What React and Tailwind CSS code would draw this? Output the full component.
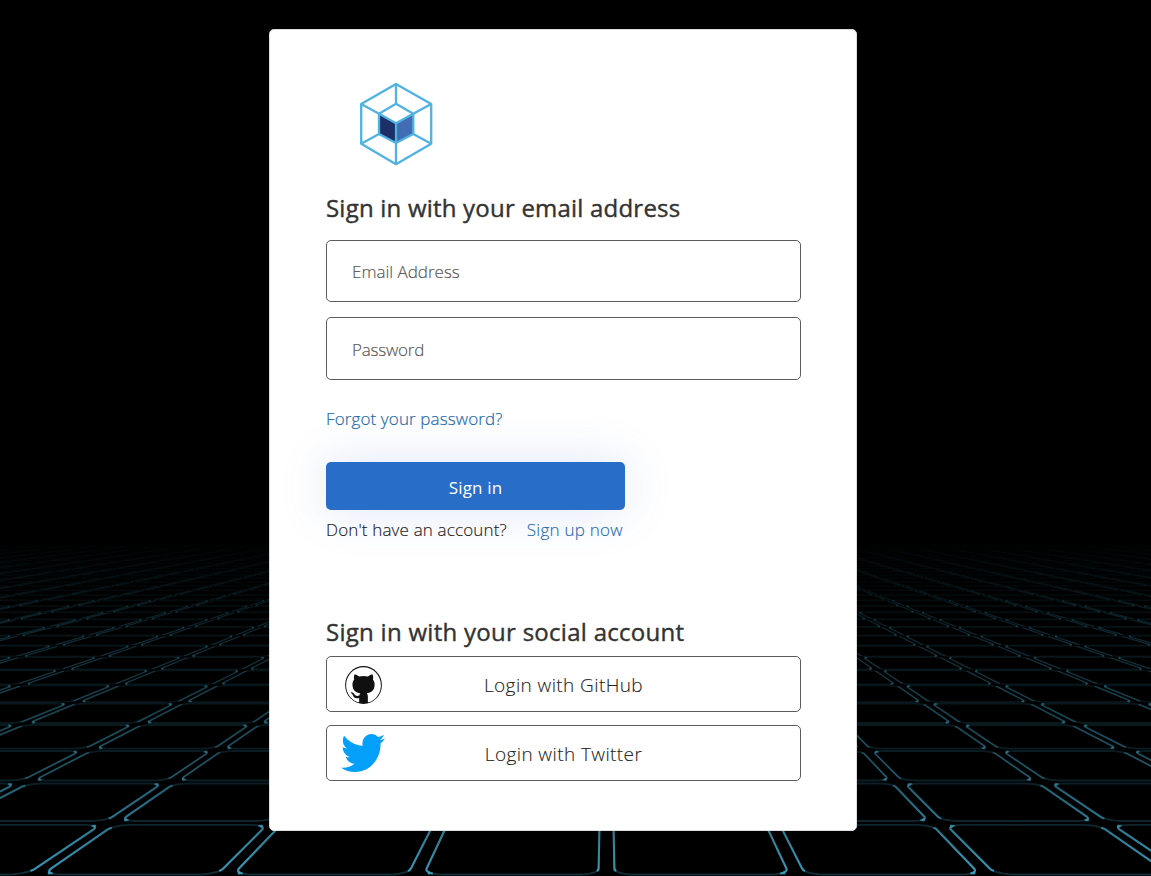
import React from "react";
import { FaTwitter } from "react-icons/fa";

const HORIZON = 485;
const CENTER = 606.5;
const INSET = 0.042;
const RADIUS = 0.095;

function project(u, n) {
  const depth = 1 / (0.002959 + 0.0004085 * n);
  return `${(CENTER + u * 0.4895 * depth).toFixed(2)} ${(HORIZON + depth).toFixed(2)}`;
}

// Points of one rounded corner on the floor plane, projected into the view.
function arc(cx, cy, from, to) {
  const points = [];
  const step = (to - from) / 6;
  for (let i = 0; i <= 6; i++) {
    const t = ((from + step * i) * Math.PI) / 180;
    points.push(project(cx + RADIUS * Math.cos(t), cy + RADIUS * Math.sin(t)));
  }
  return points;
}

function buildFloor() {
  const rows = [];
  const inner = INSET + RADIUS;
  for (let n = -2; n < 34; n++) {
    let outline = "";
    let sides = "";
    let dots = "";
    const half = Math.ceil(610 / (0.4895 / (0.002959 + 0.0004085 * (n + 1))));
    for (let k = -half; k < half; k++) {
      const left = k + inner;
      const right = k + 1 - inner;
      const near = n + inner;
      const far = n + 1 - inner;
      outline += `M${[
        ...arc(right, far, 0, 90),
        ...arc(left, far, 90, 180),
        ...arc(left, near, 180, 270),
        ...arc(right, near, 270, 360),
      ].join("L")}Z`;
      const tight = k < 0 ? 55 : 20;
      const loose = k < 0 ? 20 : 55;
      sides += `M${[...arc(right, near, 360 - loose, 360), ...arc(right, far, 0, tight)].join("L")}`;
      sides += `M${[...arc(left, far, 180 - loose, 180), ...arc(left, near, 180, 180 + tight)].join("L")}`;
      const c = RADIUS * 0.75;
      if (k < 0) {
        dots += `M${project(right + c, far + c)}h.01M${project(left - c, near - c)}h.01`;
      } else {
        dots += `M${project(left - c, far + c)}h.01M${project(right + c, near - c)}h.01`;
      }
    }
    rows.push({ n, outline, sides, dots });
  }
  return rows;
}

const floor = buildFloor();

function Backdrop() {
  return (
    <svg className="absolute inset-0 h-[876px] w-[1151px]" viewBox="0 0 1151 876" aria-hidden="true">
      <defs>
        <linearGradient id="fadeSides" gradientUnits="userSpaceOnUse" x1="0" y1="540" x2="0" y2="876">
          <stop offset="0" stopColor="#3b9dbd" stopOpacity="0" />
          <stop offset="0.15" stopColor="#3b9dbd" stopOpacity="0.09" />
          <stop offset="0.4" stopColor="#3b9dbd" stopOpacity="0.25" />
          <stop offset="0.7" stopColor="#3b9dbd" stopOpacity="0.45" />
          <stop offset="1" stopColor="#3b9dbd" stopOpacity="0.95" />
        </linearGradient>
        <linearGradient id="fadeOutline" gradientUnits="userSpaceOnUse" x1="0" y1="540" x2="0" y2="876">
          <stop offset="0" stopColor="#3b9dbd" stopOpacity="0" />
          <stop offset="0.15" stopColor="#3b9dbd" stopOpacity="0.03" />
          <stop offset="0.4" stopColor="#3b9dbd" stopOpacity="0.13" />
          <stop offset="0.7" stopColor="#3b9dbd" stopOpacity="0.19" />
          <stop offset="1" stopColor="#3b9dbd" stopOpacity="0.28" />
        </linearGradient>
        <filter id="soft" x="0" y="0" width="1" height="1">
          <feGaussianBlur stdDeviation="0.6" />
        </filter>
      </defs>
      <g filter="url(#soft)" fill="none" strokeLinecap="round">
        {floor.map((row) => (
          <g key={row.n}>
            <path d={row.outline} stroke="url(#fadeOutline)" strokeWidth={row.n < 4 ? 1.9 : 1.4} />
            <path d={row.sides} stroke="url(#fadeSides)" strokeWidth={row.n < 1 ? 2.1 : row.n < 5 ? 1.6 : 1.2} />
            {row.n < 14 && <path d={row.dots} stroke="url(#fadeSides)" strokeWidth={row.n < 4 ? 3.2 : 2.4} />}
          </g>
        ))}
      </g>
    </svg>
  );
}

function CubeLogo() {
  return (
    <svg className="ml-[30px] block h-[90px] w-[80px]" viewBox="356 80 80 90" fill="none" aria-hidden="true">
      <path d="M379 113.7L396 123.3V143L379 134Z" fill="#1d2f66" />
      <path d="M413.3 113.7L396 123.3V143L413.3 134Z" fill="#426cb4" />
      <path
        d="M396 83.9L431.2 103.9V143.7L396 164.2L361.2 143.7V103.9ZM396 103.7L413.3 113.7V134L396 143L379 134V113.7ZM379 113.7L396 123.3L413.3 113.7M396 83.9V103.7M431.2 103.9L413.3 113.7M431.2 143.7L413.3 134M396 164.2V123.3M361.2 143.7L379 134M361.2 103.9L379 113.7"
        stroke="#50b2e0"
        strokeWidth="2.3"
        strokeLinejoin="round"
      />
    </svg>
  );
}

function GitHubIcon() {
  return (
    <svg className="mt-0.5 h-[38px] w-[37px]" viewBox="0 0 37 38" aria-hidden="true">
      <ellipse cx="18.5" cy="19" rx="18.4" ry="18.9" fill="#101010" />
      <path
        transform="translate(1.1 1.2) scale(2.175 2.25)"
        fill="#fff"
        d="M8 0C3.58 0 0 3.58 0 8c0 3.54 2.29 6.53 5.47 7.59.4.07.55-.17.55-.38 0-.19-.01-.82-.01-1.49-2.01.37-2.53-.49-2.69-.94-.09-.23-.48-.94-.82-1.13-.28-.15-.68-.52-.01-.53.63-.01 1.08.58 1.23.82.72 1.21 1.87.87 2.33.66.07-.52.28-.87.51-1.07-1.78-.2-3.64-.89-3.64-3.95 0-.87.31-1.59.82-2.15-.08-.2-.36-1.02.08-2.12 0 0 .67-.21 2.2.82.64-.18 1.32-.27 2-.27s1.36.09 2 .27c1.53-1.04 2.2-.82 2.2-.82.44 1.1.16 1.92.08 2.12.51.56.82 1.27.82 2.15 0 3.07-1.87 3.75-3.65 3.95.29.25.54.73.54 1.48 0 1.07-.01 1.93-.01 2.2 0 .21.15.46.55.38A8.01 8.01 0 0 0 16 8c0-4.42-3.58-8-8-8z"
      />
    </svg>
  );
}

function SocialButton({ icon, children }) {
  return (
    <button className="grid h-14 w-full grid-cols-[72px_1fr_72px] items-center rounded-[5px] border border-[#5c5c5c] bg-white">
      <span className="flex justify-center">{icon}</span>
      <span className="pt-0.5 text-center text-[19px] font-light leading-6 tracking-[0.4px] text-[#222] [-webkit-text-stroke:0.1px]">
        {children}
      </span>
    </button>
  );
}

export default function App() {
  return (
    <div className="relative h-[876px] w-[1151px] overflow-hidden bg-black pl-[269px] pt-[29px] font-['Open_Sans',sans-serif]">
      <Backdrop />
      <main className="relative flex h-[802px] w-[588px] flex-col rounded-[5px] border border-[#ddd] bg-white pl-14 pr-[55px] pt-[50px] text-[#333]">
        <CubeLogo />
        <h1 className="mt-[22px] whitespace-nowrap text-[24px] leading-8 tracking-[0.21px] [-webkit-text-stroke:0.4px]">
          Sign in with your email address
        </h1>
        <form className="mt-4 flex flex-col" onSubmit={(e) => e.preventDefault()}>
          <input
            className="h-[62px] rounded-[5px] border border-[#5c5c5c] px-[25px] text-[17px] font-light placeholder:text-[#555] [-webkit-text-stroke:0.15px]"
            placeholder="Email Address"
          />
          <input
            type="password"
            className="mt-[15px] h-[63px] rounded-[5px] border border-[#5c5c5c] px-[25px] pt-px text-[17px] font-light tracking-[-0.2px] placeholder:text-[#555] [-webkit-text-stroke:0.15px]"
            placeholder="Password"
          />
          <a className="mt-[27px] self-start text-[17px] font-light leading-6 tracking-[0.12px] text-[#1f6cae] [-webkit-text-stroke:0.2px]" href="#">
            Forgot your password?
          </a>
          <button className="mt-[31px] h-12 w-[299px] rounded-[5px] bg-[#286ec8] pt-[3px] text-[17px] tracking-[0.15px] text-white shadow-[0_0_50px_rgba(64,100,210,0.16)]">
            Sign in
          </button>
        </form>
        <p className="mt-2 flex gap-5 whitespace-nowrap text-[17px] font-light leading-6 tracking-[0.15px] text-[#222] [-webkit-text-stroke:0.15px]">
          <span>Don't have an account?</span>
          <a className="tracking-[0.25px] text-[#1f6cae]" href="#">Sign up now</a>
        </p>
        <h2 className="mt-[74px] whitespace-nowrap text-[24px] leading-8 tracking-[0.28px] [-webkit-text-stroke:0.4px]">
          Sign in with your social account
        </h2>
        <div className="mt-2 flex flex-col gap-[13px]">
          <SocialButton icon={<GitHubIcon />}>Login with GitHub</SocialButton>
          <SocialButton
            icon={<FaTwitter viewBox="0 48 512 416" preserveAspectRatio="none" className="h-[38px] w-[44px] text-[#049ff9]" />}
          >
            Login with Twitter
          </SocialButton>
        </div>
      </main>
    </div>
  );
}
